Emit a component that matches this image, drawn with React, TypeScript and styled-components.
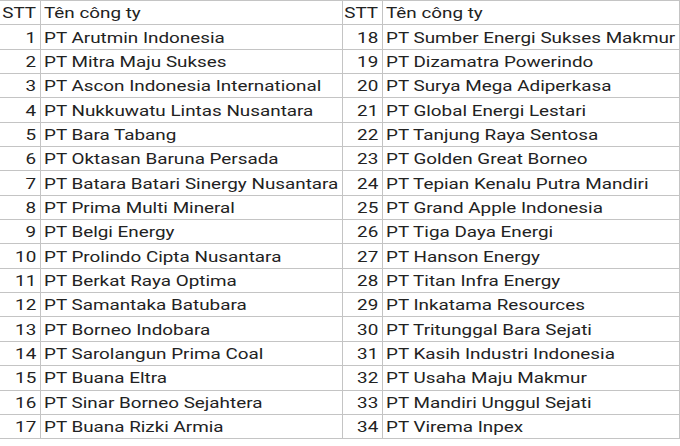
import React from "react";
import styled, { createGlobalStyle } from "styled-components";

const GlobalStyle = createGlobalStyle`
  html, body {
    margin: 0;
    padding: 0;
    background: #fff;
  }
`;

const Table = styled.table`
  border-collapse: collapse;
  table-layout: fixed;
  width: 679px;
  font-family: Roboto, "Liberation Sans", Arial, sans-serif;
  font-size: 14.5px;
  color: #222;
`;

const Row = styled.tr`
  height: 24.35px;
`;

const Cell = styled.td<{ $num?: boolean }>`
  border: 1px solid #c4c4c4;
  padding: 2px 3px 0 ${(p) => (p.$num ? "0" : "3px")};
  text-align: ${(p) => (p.$num ? "right" : "left")};
  white-space: nowrap;
  overflow: hidden;
  line-height: 21px;
  &:first-child {
    border-left: none;
  }
`;

// the source picture is stretched sideways, so the glyphs are widened to match
const Text = styled.span<{ $num?: boolean }>`
  display: inline-block;
  transform: scaleX(1.3);
  transform-origin: ${(p) => (p.$num ? "right" : "left")} center;
`;

const left = [
  "PT Arutmin Indonesia",
  "PT Mitra Maju Sukses",
  "PT Ascon Indonesia International",
  "PT Nukkuwatu Lintas Nusantara",
  "PT Bara Tabang",
  "PT Oktasan Baruna Persada",
  "PT Batara Batari Sinergy Nusantara",
  "PT Prima Multi Mineral",
  "PT Belgi Energy",
  "PT Prolindo Cipta Nusantara",
  "PT Berkat Raya Optima",
  "PT Samantaka Batubara",
  "PT Borneo Indobara",
  "PT Sarolangun Prima Coal",
  "PT Buana Eltra",
  "PT Sinar Borneo Sejahtera",
  "PT Buana Rizki Armia",
];

const right = [
  "PT Sumber Energi Sukses Makmur",
  "PT Dizamatra Powerindo",
  "PT Surya Mega Adiperkasa",
  "PT Global Energi Lestari",
  "PT Tanjung Raya Sentosa",
  "PT Golden Great Borneo",
  "PT Tepian Kenalu Putra Mandiri",
  "PT Grand Apple Indonesia",
  "PT Tiga Daya Energi",
  "PT Hanson Energy",
  "PT Titan Infra Energy",
  "PT Inkatama Resources",
  "PT Tritunggal Bara Sejati",
  "PT Kasih Industri Indonesia",
  "PT Usaha Maju Makmur",
  "PT Mandiri Unggul Sejati",
  "PT Virema Inpex",
];

export default function App() {
  return (
    <>
      <GlobalStyle />
      <Table>
        <colgroup>
          <col style={{ width: 40 }} />
          <col style={{ width: 302 }} />
          <col style={{ width: 40 }} />
          <col style={{ width: 297 }} />
        </colgroup>
        <tbody>
          <Row>
            <Cell $num>
              <Text $num>STT</Text>
            </Cell>
            <Cell>
              <Text>Tên công ty</Text>
            </Cell>
            <Cell $num>
              <Text $num>STT</Text>
            </Cell>
            <Cell>
              <Text>Tên công ty</Text>
            </Cell>
          </Row>
          {left.map((name, i) => (
            <Row key={name}>
              <Cell $num>
                <Text $num>{i + 1}</Text>
              </Cell>
              <Cell>
                <Text>{name}</Text>
              </Cell>
              <Cell $num>
                <Text $num>{i + 18}</Text>
              </Cell>
              <Cell>
                <Text>{right[i]}</Text>
              </Cell>
            </Row>
          ))}
        </tbody>
      </Table>
    </>
  );
}
